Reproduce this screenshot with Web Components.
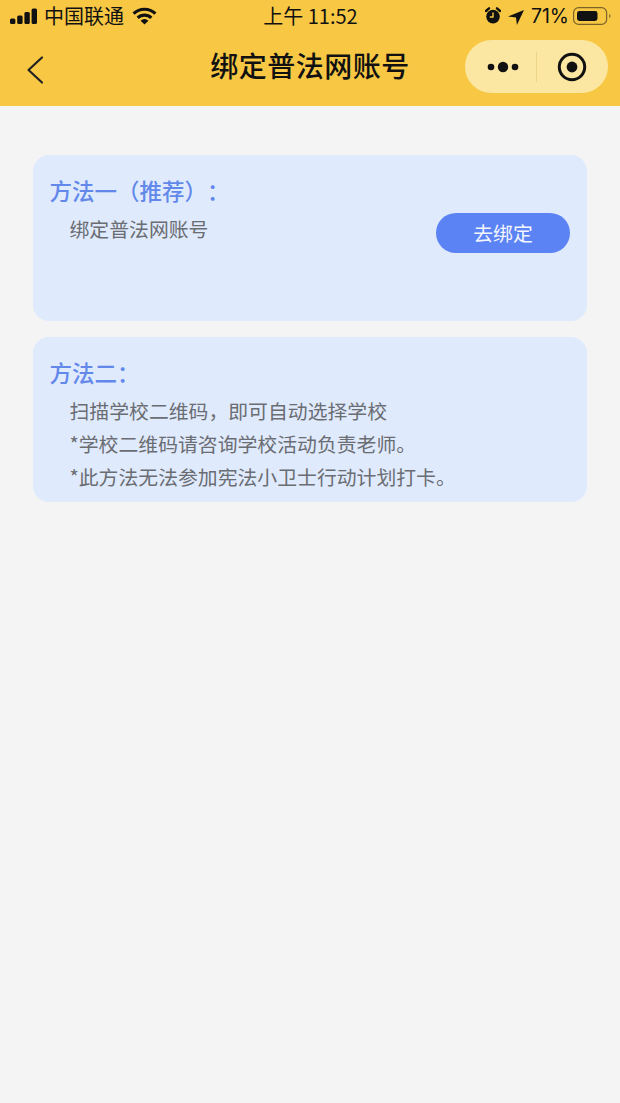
<!DOCTYPE html>
<html lang="zh">
<head>
<meta charset="utf-8">
<title>绑定普法网账号</title>
<style>
  html, body { margin: 0; height: 100%; }
  body {
    background: #f4f4f4;
    font-family: "Noto Sans CJK SC", "Liberation Sans", sans-serif;
    text-spacing-trim: space-all;
  }
  #page { display: flex; flex-direction: column; height: 1103px; overflow: hidden; }
  #content { display: flex; flex-direction: column; gap: 16px; padding: 49px 33px 0; }
</style>
</head>
<body>
<div id="page">
  <app-header title="绑定普法网账号"></app-header>
  <div id="content">
    <method-card heading="方法一（推荐）：" card-height="166">
      <div>绑定普法网账号</div>
      <bind-button slot="action">去绑定</bind-button>
    </method-card>
    <method-card heading="方法二：" card-height="165">
      <div>扫描学校二维码，即可自动选择学校</div>
      <div>*学校二维码请咨询学校活动负责老师。</div>
      <div>*此方法无法参加宪法小卫士行动计划打卡。</div>
    </method-card>
  </div>
</div>

<script>
const statusTemplate = document.createElement('template');
statusTemplate.innerHTML = `
  <style>
    :host {
      display: grid;
      grid-template-columns: 1fr auto 1fr;
      align-items: center;
      height: 32px;
      padding: 0 9px 2px 10px;
      font-size: 20px;
      line-height: 32px;
      color: #111;
    }
    .left, .right { display: flex; align-items: center; }
    .right { justify-content: flex-end; }
    svg { display: block; flex: none; }
    .carrier { margin-left: 6px; }
    .wifi { margin-left: 8px; }
    .time { font-family: "Noto Sans CJK SC", "Inter", sans-serif; }
    .alarm { margin-top: -1px; }
    .location { margin-left: 7px; margin-top: 2px; }
    .percent { margin-left: 7px; font-family: "Inter", "Liberation Sans", sans-serif; font-size: 19.5px; }
    .battery { margin-left: 4px; }
  </style>
  <div class="left">
    <svg width="28" height="16" viewBox="0 0 28 16" fill="#111">
      <rect x="0" y="10.5" width="5.4" height="5.5" rx="1.5"/>
      <rect x="7.2" y="7.5" width="5.4" height="8.5" rx="1.5"/>
      <rect x="14.4" y="4" width="5.4" height="12" rx="1.5"/>
      <rect x="21.6" y="0.5" width="5.4" height="15.5" rx="1.5"/>
    </svg>
    <span class="carrier">中国联通</span>
    <svg class="wifi" width="25" height="18" viewBox="0 0 25 18" fill="none" stroke="#111" stroke-width="3.2">
      <path d="M1.6 6.6a15.8 15.8 0 0 1 21.8 0"/>
      <path d="M5.7 10.8a9.8 9.8 0 0 1 13.6 0"/>
      <path d="M12.5 17.6l-3.9-3.9a5.6 5.6 0 0 1 7.8 0z" fill="#111" stroke="none"/>
    </svg>
  </div>
  <div class="time">上午 11:52</div>
  <div class="right">
    <svg class="alarm" width="16" height="17" viewBox="0 0 16 17">
      <circle cx="8" cy="9.6" r="6.8" fill="#111"/>
      <path d="M1 4 4 1.3M15 4 12 1.3" stroke="#111" stroke-width="2.4" stroke-linecap="round"/>
      <path d="M8 5.6V10H4.8" fill="none" stroke="#f8c845" stroke-width="1.4"/>
    </svg>
    <svg class="location" width="16" height="15" viewBox="0 0 16 15" fill="#111">
      <path d="M16 0 0 6.6 8 7.4 8.9 15z"/>
    </svg>
    <span class="percent">71%</span>
    <svg class="battery" width="38" height="18" viewBox="0 0 38 18">
      <rect x="0.6" y="0.6" width="33" height="16.8" rx="5" fill="none" stroke="#7a6327" stroke-width="1.2"/>
      <rect x="4" y="4" width="20.5" height="10" rx="2.4" fill="#111"/>
      <path d="M36.2 7c.9.3 1.4 1.1 1.4 2s-.5 1.7-1.4 2z" fill="#8a7030"/>
    </svg>
  </div>
`;

class StatusBar extends HTMLElement {
  constructor() {
    super();
    this.attachShadow({ mode: 'open' }).appendChild(statusTemplate.content.cloneNode(true));
  }
}
customElements.define('status-bar', StatusBar);

const capsuleTemplate = document.createElement('template');
capsuleTemplate.innerHTML = `
  <style>
    :host {
      display: flex;
      align-items: center;
      width: 143px;
      height: 53px;
      border-radius: 27px;
      background: #fbe7a2;
    }
    .side { flex: 1; display: flex; align-items: center; justify-content: center; }
    .more { padding-left: 3px; }
    .close { padding-right: 2px; }
    .divider { width: 1px; height: 30px; margin-left: -1px; background: #ecd58a; }
    svg { display: block; }
  </style>
  <div class="side more">
    <svg width="32" height="12" viewBox="0 0 32 12" fill="#111">
      <circle cx="4" cy="6" r="3.3"/>
      <circle cx="16" cy="6" r="5.2"/>
      <circle cx="28" cy="6" r="3.3"/>
    </svg>
  </div>
  <div class="divider"></div>
  <div class="side close">
    <svg width="30" height="30" viewBox="0 0 30 30">
      <circle cx="15" cy="15" r="12.7" fill="none" stroke="#111" stroke-width="3"/>
      <circle cx="15" cy="15" r="5.4" fill="#111"/>
    </svg>
  </div>
`;

class NavCapsule extends HTMLElement {
  constructor() {
    super();
    this.attachShadow({ mode: 'open' }).appendChild(capsuleTemplate.content.cloneNode(true));
  }
}
customElements.define('nav-capsule', NavCapsule);

const headerTemplate = document.createElement('template');
headerTemplate.innerHTML = `
  <style>
    :host { display: block; background: #f8c845; height: 106px; }
    .nav {
      display: grid;
      grid-template-columns: 143px 1fr 143px;
      align-items: center;
      height: 53px;
      padding: 6px 12px 0;
    }
    .back { display: block; margin: 6px 0 0 14px; }
    .title {
      margin-bottom: 2px;
      text-align: center;
      font-size: 28px;
      line-height: 51px;
      font-weight: 500;
      color: #111;
      letter-spacing: 0.5px;
    }
  </style>
  <status-bar></status-bar>
  <div class="nav">
    <svg class="back" width="20" height="30" viewBox="0 0 20 30" fill="none" stroke="#222" stroke-width="2.2" stroke-linecap="round" stroke-linejoin="round">
      <path d="M16 2.5 2.5 15 16 27.5"/>
    </svg>
    <div class="title"></div>
    <nav-capsule></nav-capsule>
  </div>
`;

class AppHeader extends HTMLElement {
  constructor() {
    super();
    this.attachShadow({ mode: 'open' }).appendChild(headerTemplate.content.cloneNode(true));
    this.shadowRoot.querySelector('.title').textContent = this.getAttribute('title');
  }
}
customElements.define('app-header', AppHeader);

const cardTemplate = document.createElement('template');
cardTemplate.innerHTML = `
  <style>
    :host {
      display: block;
      box-sizing: border-box;
      padding: 19px 17px 0 16.5px;
      border-radius: 16px;
      background: #e0eafd;
    }
    .heading { font-size: 22.5px; line-height: 33px; font-weight: 500; color: #6288ea; }
    .row { display: flex; justify-content: space-between; align-items: flex-start; }
    .body {
      padding: 5px 0 0 20px;
      font-size: 19.85px;
      line-height: 33px;
      color: #6a6d72;
    }
    ::slotted([slot="action"]) { margin-top: 6px; }
  </style>
  <div class="heading"></div>
  <div class="row">
    <div class="body"><slot></slot></div>
    <slot name="action"></slot>
  </div>
`;

class MethodCard extends HTMLElement {
  constructor() {
    super();
    this.attachShadow({ mode: 'open' }).appendChild(cardTemplate.content.cloneNode(true));
    this.shadowRoot.querySelector('.heading').textContent = this.getAttribute('heading');
    this.style.height = `${this.getAttribute('card-height')}px`;
  }
}
customElements.define('method-card', MethodCard);

const buttonTemplate = document.createElement('template');
buttonTemplate.innerHTML = `
  <style>
    :host {
      display: flex;
      align-items: center;
      justify-content: center;
      width: 134px;
      height: 40px;
      padding-bottom: 2px;
      box-sizing: border-box;
      border-radius: 20px;
      background: #5b83f3;
      color: #f3f6ff;
      font-size: 19.85px;
    }
  </style>
  <slot></slot>
`;

class BindButton extends HTMLElement {
  constructor() {
    super();
    this.attachShadow({ mode: 'open' }).appendChild(buttonTemplate.content.cloneNode(true));
  }
}
customElements.define('bind-button', BindButton);
</script>
</body>
</html>
